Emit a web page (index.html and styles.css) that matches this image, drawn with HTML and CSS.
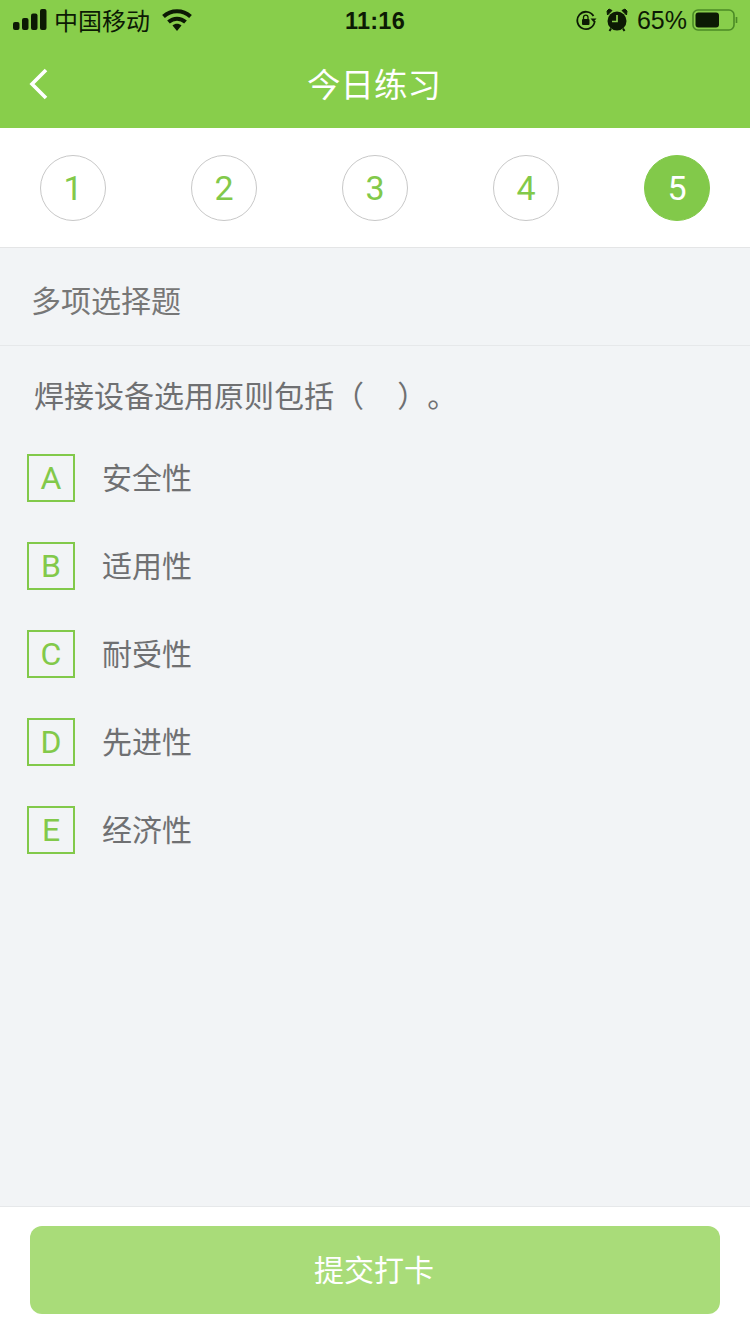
FILE: index.html
```html
<!DOCTYPE html>
<html>
<head>
  <title>今日练习</title>
  <meta name="viewport" content="width=device-width, initial-scale=1">
  <link rel="stylesheet" href="styles.css">
</head>
<body>
  <div class="page">
    <header class="top">
      <div class="status">
        <div class="status-left">
          <svg class="signal" width="34" height="22" viewBox="0 0 34 22">
            <rect x="0" y="13" width="6.500" height="8" rx="2"/>
            <rect x="9" y="9" width="6.500" height="12" rx="2"/>
            <rect x="18" y="4.500" width="6.500" height="16.500" rx="2"/>
            <rect x="27" y="0" width="6.500" height="21" rx="2"/>
          </svg>
          <span class="carrier">中国移动</span>
          <svg class="wifi" width="30" height="24" viewBox="0 0 30 24">
            <path d="M1.500 8.500C9 1.500 21 1.500 28.500 8.500" fill="none" stroke="#0c1a04" stroke-width="4"/>
            <path d="M6.500 14C11.500 9.500 18.500 9.500 23.500 14" fill="none" stroke="#0c1a04" stroke-width="4"/>
            <path d="M10.500 17.500L15 23l4.500-5.500C17 15.200 13 15.200 10.500 17.500z" fill="#0c1a04"/>
          </svg>
        </div>
        <div class="clock">11:16</div>
        <div class="status-right">
          <svg width="22" height="22" viewBox="0 0 22 22" fill="none">
            <path d="M18.500 7A8.700 8.700 0 1 0 19.700 12" stroke="#0c1a04" stroke-width="1.800"/>
            <path d="M15.500 9.500h6l-3 3.500z" fill="#0c1a04"/>
            <rect x="7" y="10" width="7.500" height="6" rx="1" fill="#0c1a04"/>
            <path d="M8.500 10V8.300a2.200 2.200 0 0 1 4.500 0V10" stroke="#0c1a04" stroke-width="1.300"/>
          </svg>
          <svg class="alarm" width="22" height="24" viewBox="0 0 22 24" fill="none">
            <circle cx="11" cy="13" r="9.500" fill="#0c1a04"/>
            <path d="M1.500 7L6 2.500 3 1 1 3zM20.500 7L16 2.500 19 1 21 3z" fill="#0c1a04" stroke="#0c1a04"/>
            <path d="M11 7V13.500H6" stroke="#88ce4b" stroke-width="1.700"/>
            <path d="M5 20.500L3.500 23M17 20.500L18.500 23" stroke="#0c1a04" stroke-width="2"/>
          </svg>
          <span class="percent">65%</span>
          <svg class="battery" width="46" height="22" viewBox="0 0 46 22" fill="none">
            <rect x="1" y="1" width="41" height="20" rx="5" stroke="#4b8a26" stroke-width="1.600"/>
            <rect x="3.500" y="3.500" width="23.500" height="15" rx="3" fill="#0c1a04"/>
            <path d="M44.500 8v6" stroke="#4b8a26" stroke-width="1.600"/>
          </svg>
        </div>
      </div>
      <div class="nav">
        <svg class="back" width="20" height="32" viewBox="0 0 20 32" fill="none">
          <path d="M17 2L3 16l14 14" stroke="#fff" stroke-width="3.600"/>
        </svg>
        <h1>今日练习</h1>
      </div>
    </header>

    <div class="steps">
      <div class="step">1</div>
      <div class="step">2</div>
      <div class="step">3</div>
      <div class="step">4</div>
      <div class="step active">5</div>
    </div>

    <main class="content">
      <div class="type">多项选择题</div>
      <div class="question">焊接设备选用原则包括（&nbsp;&nbsp;&nbsp;&nbsp;）。</div>
      <ul class="options">
        <li><span class="letter">A</span><span class="label">安全性</span></li>
        <li><span class="letter">B</span><span class="label">适用性</span></li>
        <li><span class="letter">C</span><span class="label">耐受性</span></li>
        <li><span class="letter">D</span><span class="label">先进性</span></li>
        <li><span class="letter">E</span><span class="label">经济性</span></li>
      </ul>
    </main>

    <footer class="bottom">
      <button class="submit"><span class="label">提交打卡</span></button>
    </footer>
  </div>
</body>
</html>
```

FILE: styles.css
```css
body {
  margin: 0;
  font-family: "Liberation Sans", "Noto Sans CJK SC", sans-serif;
  background: #f2f4f6;
  color: #6f7072;
  text-spacing-trim: space-all;
}

.page {
  display: flex;
  flex-direction: column;
  height: 1334px;
  overflow: hidden;
}

.top {
  background: #88ce4b;
  height: 128px;
}

.status {
  display: flex;
  justify-content: space-between;
  align-items: center;
  height: 40px;
  padding: 0 12px 0 13px;
  color: #0c1a04;
  position: relative;
}

.status-left, .status-right {
  display: flex;
  align-items: center;
}

.signal {
  fill: #0c1a04;
}

.carrier {
  font-size: 24px;
  margin-left: 7px;
  padding-bottom: 2px;
}

.wifi {
  margin-left: 12px;
}

.clock {
  position: absolute;
  left: 0;
  right: 0;
  top: 8px;
  text-align: center;
  font-size: 23.500px;
  font-weight: bold;
  letter-spacing: 0.2px;
}

.alarm {
  margin-left: 9px;
}

.percent {
  font-size: 25px;
  margin-left: 9px;
}

.battery {
  margin-left: 5px;
}

.nav {
  position: relative;
  display: flex;
  align-items: center;
  justify-content: center;
  height: 88px;
}

.back {
  position: absolute;
  left: 29px;
  top: 28px;
}

h1 {
  margin: 0;
  padding: 0 2px 4px 0;
  font-size: 33.500px;
  font-weight: normal;
  color: #fff;
}

.steps {
  display: flex;
  justify-content: space-between;
  align-items: center;
  height: 119px;
  padding: 0 40px;
  background: #fff;
  border-bottom: 1px solid #e4e5e6;
}

.step {
  width: 64px;
  height: 64px;
  border: 1px solid #c8c8c8;
  border-radius: 50%;
  display: flex;
  align-items: center;
  justify-content: center;
  font-family: Roboto, "Liberation Sans", sans-serif;
  font-size: 34px;
  color: #82c94a;
  background: #fff;
}

.step.active {
  background: #82c94a;
  border-color: #82c94a;
  color: #fff;
}

.content {
  flex: 1;
}

.type {
  box-sizing: border-box;
  height: 98px;
  line-height: 107px;
  padding-left: 31px;
  font-size: 30px;
  color: #777;
  border-bottom: 1px solid #e6e8ea;
}

.question {
  padding: 30px 0 0 34px;
  font-size: 30px;
  line-height: 42px;
}

.options {
  list-style: none;
  margin: 36px 0 0;
  padding: 0 0 0 27px;
}

.options li {
  display: flex;
  align-items: center;
  height: 48px;
  margin-bottom: 40px;
  font-size: 30px;
}

.label {
  display: block;
  padding-bottom: 5px;
}

.letter {
  box-sizing: border-box;
  width: 48px;
  height: 48px;
  margin-right: 27px;
  border: 2px solid #82c94a;
  display: flex;
  align-items: center;
  justify-content: center;
  font-family: Roboto, "Liberation Sans", sans-serif;
  font-size: 32px;
  color: #82c94a;
}

.bottom {
  height: 128px;
  box-sizing: border-box;
  padding: 19px 30px 0;
  background: #fff;
  border-top: 1px solid #e6e8ea;
}

.submit {
  display: block;
  width: 100%;
  height: 88px;
  padding: 0 2px 0 0;
  border: none;
  border-radius: 12px;
  background: #a9dc79;
  color: #fff;
  font-family: inherit;
  font-size: 30px;
}
```
